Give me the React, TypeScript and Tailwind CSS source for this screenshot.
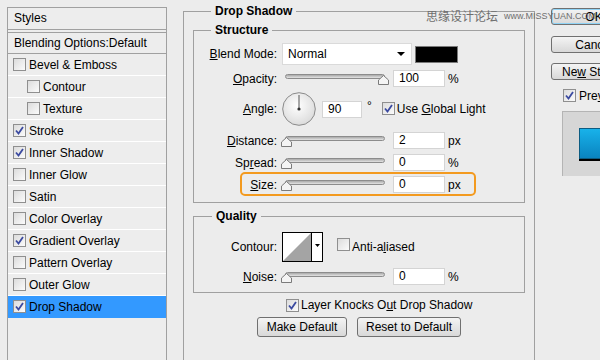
import React from "react"

const font = { fontFamily: '"Liberation Sans", Arial, sans-serif' }

function Check({ checked = false }: { checked?: boolean }) {
  return (
    <span className="inline-flex w-[13px] h-[13px] shrink-0 border border-[#8f8f8f] bg-gradient-to-br from-[#dcdcdc] to-[#fbfbfb] items-center justify-center">
      {checked && (
        <svg width="9" height="9" viewBox="0 0 9 9">
          <path d="M1 4.5 L3.5 7.5 L8 1" fill="none" stroke="#3b4aa0" strokeWidth="1.8" />
        </svg>
      )}
    </span>
  )
}

function Slider({ right = false }: { right?: boolean }) {
  return (
    <div className="relative w-[106px] h-[17px] shrink-0">
      <div className="absolute left-[3px] right-[3px] top-[4px] h-[5px] rounded-full border border-[#8c8c8c] bg-gradient-to-b from-[#a9a9a9] to-[#e4e4e4]" />
      <svg
        className={right ? "absolute left-[96px] top-[5px]" : "absolute left-[-1px] top-[5px]"}
        width="11"
        height="10"
        viewBox="0 0 11 10"
      >
        <path d="M0.5 9.5 V5 L5.5 0.5 L10.5 5 V9.5 Z" fill="#f4f4f4" stroke="#7b7b7b" />
      </svg>
    </div>
  )
}

function Field({ value, w = "w-[52px]" }: { value: string; w?: string }) {
  return (
    <div className={`${w} h-[17px] shrink-0 bg-white border border-[#d4d4d4] pl-[5px] leading-[15px]`}>{value}</div>
  )
}

function Label({ children }: { children: React.ReactNode }) {
  return <div className="w-[83px] shrink-0 text-right">{children}</div>
}

function SliderRow({ label, value, unit, right }: { label: React.ReactNode; value: string; unit: string; right?: boolean }) {
  return (
    <div className="flex items-center h-[17px]">
      <Label>{label}</Label>
      <div className="ml-[5px]">
        <Slider right={right} />
      </div>
      <div className="ml-[5px]">
        <Field value={value} />
      </div>
      <span className="ml-[3px]">{unit}</span>
    </div>
  )
}

function Button({ children, w, className = "" }: { children: React.ReactNode; w: string; className?: string }) {
  return (
    <div
      className={`${w} shrink-0 rounded-[3px] border border-[#707070] bg-gradient-to-b from-[#f4f4f4] to-[#d8d8d8] flex items-center justify-center whitespace-nowrap ${className}`}
    >
      {children}
    </div>
  )
}

const styles: { name: string; checked: boolean; sub?: boolean; selected?: boolean }[] = [
  { name: "Bevel & Emboss", checked: false },
  { name: "Contour", checked: false, sub: true },
  { name: "Texture", checked: false, sub: true },
  { name: "Stroke", checked: true },
  { name: "Inner Shadow", checked: true },
  { name: "Inner Glow", checked: false },
  { name: "Satin", checked: false },
  { name: "Color Overlay", checked: false },
  { name: "Gradient Overlay", checked: true },
  { name: "Pattern Overlay", checked: false },
  { name: "Outer Glow", checked: false },
  { name: "Drop Shadow", checked: true, selected: true },
]

export default function App() {
  return (
    <div className="relative w-[600px] h-[360px] overflow-hidden bg-[#ececec] text-[12px] text-black flex items-start" style={font}>
      {/* Styles list */}
      <div className="ml-[7px] mt-[7px] w-[160px] h-[380px] shrink-0 border border-[#a0a0a0] bg-[#ededed]">
        <div className="h-[22px] px-[6px] leading-[20px] border-b border-[#a0a0a0]">Styles</div>
        <div className="mt-[2px] h-[22px] px-[6px] leading-[20px] border-t border-b border-[#a0a0a0]">Blending Options:Default</div>
        {styles.map((s) => (
          <div
            key={s.name}
            className={`h-[22px] flex items-center border-b ${s.selected ? "bg-[#3399ff] border-[#3399ff]" : "border-white"} ${s.sub ? "pl-[19px]" : "pl-[5px]"}`}
          >
            <Check checked={s.checked} />
            <span className="ml-[3px]">{s.name}</span>
          </div>
        ))}
      </div>

      {/* Drop Shadow group */}
      <fieldset className="ml-[16px] mt-[4px] w-[352px] h-[380px] shrink-0 border border-[#a0a0a0] px-[9px] pt-[5px]">
        <legend className="ml-[18px] px-[4px] font-bold leading-[14px]">Drop Shadow</legend>

        <fieldset className="border border-[#a0a0a0] pb-[9px]">
          <legend className="ml-[17px] px-[4px] font-bold leading-[14px]">Structure</legend>

          <div className="mt-[6px] flex items-center h-[22px]">
            <Label>
              <u>B</u>lend Mode:
            </Label>
            <div className="ml-[5px] w-[130px] h-[22px] bg-white border border-[#dadada] flex items-center pl-[5px] pr-[6px] justify-between">
              <span>Normal</span>
              <svg width="8" height="4" viewBox="0 0 8 4">
                <path d="M0 0 H8 L4 4 Z" fill="#000" />
              </svg>
            </div>
            <div className="ml-[3px] w-[43px] h-[17px] bg-black border border-[#7a7a7a]" />
          </div>

          <div className="mt-[5px]">
            <SliderRow label={<><u>O</u>pacity:</>} value="100" unit="%" right />
          </div>

          <div className="mt-[5px] flex items-center h-[34px]">
            <Label>
              <u>A</u>ngle:
            </Label>
            <svg className="ml-[5px] shrink-0" width="34" height="34" viewBox="0 0 34 34">
              <defs>
                <radialGradient id="dial" cx="45%" cy="40%" r="60%">
                  <stop offset="0" stopColor="#ffffff" />
                  <stop offset="1" stopColor="#dcdcdc" />
                </radialGradient>
              </defs>
              <circle cx="17" cy="17" r="16.3" fill="url(#dial)" stroke="#8a8a8a" />
              <line x1="17" y1="17" x2="17" y2="3" stroke="#555" strokeWidth="1" />
              <circle cx="17" cy="17" r="1.6" fill="#333" />
            </svg>
            <div className="ml-[6px]">
              <Field value="90" w="w-[40px]" />
            </div>
            <span className="ml-[5px] -mt-[6px]">°</span>
            <div className="ml-[10px]">
              <Check checked />
            </div>
            <span className="ml-[2px]">
              Use <u>G</u>lobal Light
            </span>
          </div>

          <div className="mt-[6px]">
            <SliderRow label={<><u>D</u>istance:</>} value="2" unit="px" />
          </div>
          <div className="mt-[5px]">
            <SliderRow label={<>Sp<u>r</u>ead:</>} value="0" unit="%" />
          </div>
          <div className="relative mt-[5px]">
            <SliderRow label={<><u>S</u>ize:</>} value="0" unit="px" />
            <span className="absolute left-[46px] top-[-4px] w-[236px] h-[24px] rounded-[5px] border-2 border-[#f39a1f]" />
          </div>
        </fieldset>

        <fieldset className="mt-[6px] border border-[#a0a0a0] pb-[7px]">
          <legend className="ml-[18px] px-[4px] font-bold leading-[14px]">Quality</legend>
          <div className="mt-[9px] flex items-center h-[30px]">
            <Label>Contour:</Label>
            <svg className="ml-[5px] shrink-0" width="41" height="30" viewBox="0 0 41 30">
              <rect x="0.5" y="0.5" width="40" height="29" fill="#fff" stroke="#000" />
              <path d="M1 29 L29 1 V29 Z" fill="#a4a4a4" />
              <line x1="29.5" y1="0" x2="29.5" y2="30" stroke="#000" />
              <path d="M33 12 H38 L35.5 15 Z" fill="#000" />
            </svg>
            <div className="ml-[14px]">
              <Check />
            </div>
            <span className="ml-[2px]">
              Anti-a<u>l</u>iased
            </span>
          </div>
          <div className="mt-[6px]">
            <SliderRow label={<><u>N</u>oise:</>} value="0" unit="%" />
          </div>
        </fieldset>

        <div className="mt-[5px] ml-[93px] flex items-center h-[14px]">
          <Check checked />
          <span className="ml-[2px]">
            Layer Knocks O<u>u</u>t Drop Shadow
          </span>
        </div>
        <div className="mt-[5px] ml-[64px] flex gap-[10px]">
          <Button w="w-[90px] h-[20px]">Make Default</Button>
          <Button w="w-[104px] h-[20px]">Reset to Default</Button>
        </div>
      </fieldset>

      {/* Right column */}
      <div className="ml-[16px] mt-[8px] w-[86px] shrink-0 flex flex-col">
        <Button w="w-[86px] h-[17px]" className="border-[#3c7fb1] shadow-[0_0_0_1px_#8fd3f5_inset]">
          OK
        </Button>
        <Button w="w-[86px] h-[17px]" className="mt-[11px]">
          Cancel
        </Button>
        <Button w="w-[86px] h-[17px]" className="mt-[10px]">
          <span>
            Ne<u>w</u> Style...
          </span>
        </Button>
        <div className="mt-[9px] ml-[12px] flex items-center h-[13px]">
          <Check checked />
          <span className="ml-[3px]">
            Pre<u>v</u>iew
          </span>
        </div>
        <div className="mt-[9px] ml-[11px] w-[80px] h-[65px] bg-[#d6d6d6] border-l border-t border-[#b4b4b4] pl-[16px] pt-[16px]">
          <div className="w-[40px] h-[31px] border border-[#0c5c82] bg-gradient-to-b from-[#18b2ea] to-[#0a84c0] shadow-[0_2px_0_#000]" />
        </div>
      </div>

      {/* watermark */}
      <div className="absolute left-[426px] top-[8px] flex items-center gap-[6px] whitespace-nowrap text-[#6f6f6f]">
        <span className="text-[12px] leading-[16px] shrink-0" style={{ fontFamily: '"Noto Sans CJK SC", sans-serif' }}>
          思缘设计论坛
        </span>
        <span className="text-[9px] leading-[16px] shrink-0">www.MISSYUAN.COM</span>
      </div>
    </div>
  )
}
